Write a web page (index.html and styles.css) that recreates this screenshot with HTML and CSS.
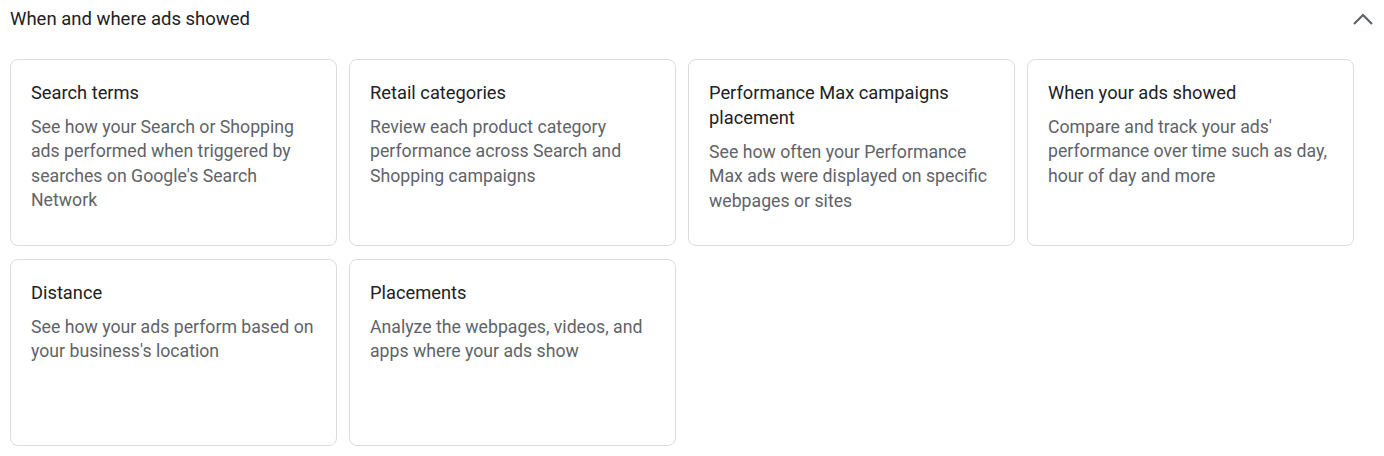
FILE: index.html
```html
<!DOCTYPE html>
<html>
<head>
<meta charset="utf-8">
<link rel="stylesheet" href="styles.css">
</head>
<body>
<div class="section">
  <div class="header">
    <div class="header-title">When and where ads showed</div>
    <svg class="chevron" width="22" height="14" viewBox="0 0 22 14"><polyline points="2,12 11,3 20,12" fill="none" stroke="#5f6368" stroke-width="2.2"/></svg>
  </div>
  <div class="grid">
    <div class="card">
      <div class="card-title">Search terms</div>
      <div class="card-desc">See how your Search or Shopping ads performed when triggered by searches on Google's Search Network</div>
    </div>
    <div class="card">
      <div class="card-title">Retail categories</div>
      <div class="card-desc">Review each product category performance across Search and Shopping campaigns</div>
    </div>
    <div class="card">
      <div class="card-title">Performance Max campaigns placement</div>
      <div class="card-desc">See how often your Performance Max ads were displayed on specific webpages or sites</div>
    </div>
    <div class="card">
      <div class="card-title">When your ads showed</div>
      <div class="card-desc">Compare and track your ads' performance over time such as day, hour of day and more</div>
    </div>
    <div class="card">
      <div class="card-title">Distance</div>
      <div class="card-desc">See how your ads perform based on your business's location</div>
    </div>
    <div class="card">
      <div class="card-title">Placements</div>
      <div class="card-desc">Analyze the webpages, videos, and apps where your ads show</div>
    </div>
  </div>
</div>
</body>
</html>
```

FILE: styles.css
```css
html, body {
  margin: 0;
  padding: 0;
  background: #ffffff;
}
body {
  font-family: Roboto, "Liberation Sans", Arial, sans-serif;
  color: #202124;
}
.section {
  padding: 6px 10px 0 10px;
}
.header {
  display: flex;
  align-items: center;
  justify-content: space-between;
  height: 26px;
  margin-bottom: 27px;
}
.header-title {
  font-size: 18.5px;
  line-height: 24px;
  color: #202124;
}
.chevron {
  margin-right: 0;
  margin-top: -1px;
}
.grid {
  display: grid;
  grid-template-columns: repeat(4, 327px);
  grid-auto-rows: 187px;
  column-gap: 12px;
  row-gap: 13px;
}
.card {
  border: 1px solid #dadce0;
  border-radius: 8px;
  padding: 20px 20px 0 20px;
  box-sizing: border-box;
}
.card-title {
  font-size: 18.3px;
  line-height: 25px;
  color: #202124;
  margin-bottom: 10px;
}
.card-desc {
  font-size: 17.7px;
  line-height: 24.4px;
  color: #5f6368;
}
```
